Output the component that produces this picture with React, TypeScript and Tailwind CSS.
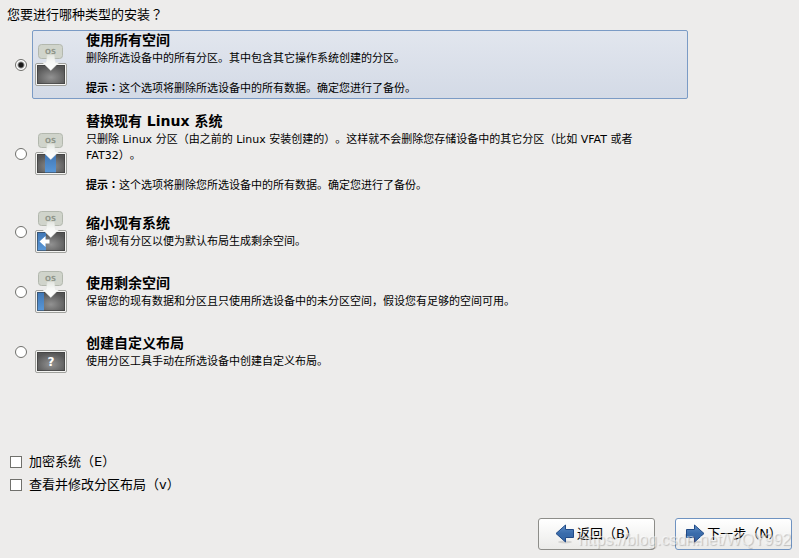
import { ReactNode, useId, useState } from 'react';

type InstallType = 'all' | 'replace' | 'shrink' | 'free' | 'custom';

type InstallOption = {
  value: InstallType;
  title: string;
  description: string;
  hint?: string;
};

const OPTIONS: InstallOption[] = [
  {
    value: 'all',
    title: '使用所有空间',
    description: '删除所选设备中的所有分区。其中包含其它操作系统创建的分区。',
    hint: '这个选项将删除所选设备中的所有数据。确定您进行了备份。'
  },
  {
    value: 'replace',
    title: '替换现有 Linux 系统',
    description:
      '只删除 Linux 分区（由之前的 Linux 安装创建的）。这样就不会删除您存储设备中的其它分区（比如 VFAT 或者 FAT32）。',
    hint: '这个选项将删除您所选设备中的所有数据。确定您进行了备份。'
  },
  {
    value: 'shrink',
    title: '缩小现有系统',
    description: '缩小现有分区以便为默认布局生成剩余空间。'
  },
  {
    value: 'free',
    title: '使用剩余空间',
    description: '保留您的现有数据和分区且只使用所选设备中的未分区空间，假设您有足够的空间可用。'
  },
  {
    value: 'custom',
    title: '创建自定义布局',
    description: '使用分区工具手动在所选设备中创建自定义布局。'
  }
];

function DiskIcon({ type }: { type: InstallType }) {
  const id = useId();

  return (
    <svg width="34" height="44" viewBox="0 0 34 44" className="shrink-0" aria-hidden="true">
      <defs>
        <radialGradient id={`${id}-disk`} cx="0.5" cy="0.65" r="0.6">
          <stop offset="0" stopColor="#929292" />
          <stop offset="1" stopColor="#565656" />
        </radialGradient>
        <linearGradient id={`${id}-part`} x1="0" y1="0" x2="0" y2="1">
          <stop offset="0" stopColor="#3f76b4" />
          <stop offset="1" stopColor="#5a98d8" />
        </linearGradient>
        <linearGradient id={`${id}-arrow`} x1="0" y1="0" x2="0" y2="1">
          <stop offset="0" stopColor="#e3e6e0" />
          <stop offset="0.4" stopColor="#f6f7f5" />
          <stop offset="1" stopColor="#ffffff" />
        </linearGradient>
      </defs>
      <rect x="1.5" y="20.5" width="31" height="22" rx="1.5" fill="#f4f4f2" stroke="#a0a19d" />
      <rect x="3" y="22" width="28" height="19" fill={`url(#${id}-disk)`} />
      {type === 'replace' && <rect x="11" y="22" width="11" height="19" fill={`url(#${id}-part)`} />}
      {type === 'shrink' && <rect x="3" y="22" width="9" height="19" fill={`url(#${id}-part)`} />}
      {type === 'free' && <rect x="3" y="22" width="7" height="19" fill={`url(#${id}-part)`} />}
      <rect x="3.5" y="22.5" width="27" height="18" fill="none" stroke="#333" strokeOpacity="0.5" />
      {type === 'custom' ? (
        <text x="17" y="36" textAnchor="middle" fontFamily="DejaVu Sans" fontSize="12" fontWeight="700" fill="#fff">
          ?
        </text>
      ) : (
        <>
          <rect x="4.5" y="1.5" width="24" height="14" rx="3" fill="#d0d4cb" stroke="#b3b8ae" />
          <text x="16.5" y="11" textAnchor="middle" fontFamily="DejaVu Sans" fontSize="7" fontWeight="700" fill="#8f958a">
            OS
          </text>
          <path d="M13.500 12h6.500l1.500 7.500h3.500l-8.200 8-8.300-8h3.500z" fill={`url(#${id}-arrow)`} stroke="#e4e6e2" strokeWidth="0.5" />
        </>
      )}
      {type === 'shrink' && <path d="M5.500 31.500l6-5.500v3.500h4v4h-4v3.500z" fill="#fff" />}
    </svg>
  );
}

function ArrowIcon({ direction }: { direction: 'left' | 'right' }) {
  const id = useId();

  return (
    <svg width="20" height="20" viewBox="0 0 20 20" className="shrink-0" aria-hidden="true">
      <defs>
        <linearGradient id={id} x1="0" y1="0" x2="0" y2="1">
          <stop offset="0" stopColor="#5c8cc6" />
          <stop offset="0.5" stopColor="#3a6cab" />
          <stop offset="1" stopColor="#3465a4" />
        </linearGradient>
      </defs>
      <ellipse cx="10" cy="18" rx="7" ry="1.5" fill="#000" opacity="0.12" />
      <path
        d={direction === 'left' ? 'M1 9.500L10.500 1v4.500h8v8h-8V18z' : 'M19 9.500L9.500 1v4.500h-8v8h8V18z'}
        fill={`url(#${id})`}
        stroke="#204a87"
        strokeLinejoin="round"
      />
    </svg>
  );
}

function OptionRow({ option, checked, onSelect }: { option: InstallOption; checked: boolean; onSelect: () => void }) {
  return (
    <label className="flex items-center gap-[5px]">
      <input
        type="radio"
        name="install-type"
        value={option.value}
        checked={checked}
        onChange={onSelect}
        className="size-3 shrink-0 appearance-none rounded-full border border-[#70706c] bg-white checked:bg-[radial-gradient(circle,#1a1a1a_2px,#fff_4px)]"
      />
      <span
        className={`flex w-full max-w-[656px] items-center gap-[18px] rounded-xs border p-px ${
          checked ? 'border-[#7b9bc5] bg-linear-to-b from-[#e2e6ee] to-[#d3dae6]' : 'border-transparent'
        }`}
      >
        <DiskIcon type={option.value} />
        <span className="flex flex-col gap-0.5 pr-10">
          <span className="text-sm leading-[17px] font-bold">{option.title}</span>
          <span className="text-[11px] leading-4">{option.description}</span>
          {option.hint && (
            <span className="mt-3 text-[11px] leading-4">
              <b className="font-['DejaVu_Sans','Noto_Sans_CJK_JP',sans-serif] leading-none">提示：</b>
              {option.hint}
            </span>
          )}
        </span>
      </span>
    </label>
  );
}

function CheckOption({ children }: { children: ReactNode }) {
  return (
    <label className="flex items-center gap-[7px] text-[13px] leading-[23px]">
      <input
        type="checkbox"
        className="size-3 shrink-0 appearance-none border border-[#70706c] bg-white checked:bg-[#4a6f9f]"
      />
      {children}
    </label>
  );
}

export default function App() {
  const [installType, setInstallType] = useState<InstallType>('all');

  return (
    <main className="relative flex min-h-screen flex-col bg-[#edeceb] px-[7px] pt-1.5 pb-2 font-['DejaVu_Sans','Noto_Sans_CJK_SC',sans-serif] text-black [text-spacing-trim:space-all]">
      <fieldset>
        <legend className="text-[13px] leading-[18px]">
          您要进行哪种类型的安装
          <span className="font-['DejaVu_Sans','Noto_Sans_CJK_JP',sans-serif] leading-none">？</span>
        </legend>
        <div className="flex flex-col gap-3 pt-1.5 pl-2">
          {OPTIONS.map((option) => (
            <OptionRow
              key={option.value}
              option={option}
              checked={installType === option.value}
              onSelect={() => setInstallType(option.value)}
            />
          ))}
        </div>
      </fieldset>

      <div className="mt-auto flex flex-col pt-6 pb-[22px] pl-[3px]">
        <CheckOption>加密系统（E）</CheckOption>
        <CheckOption>查看并修改分区布局（v）</CheckOption>
      </div>

      <div className="flex justify-end gap-5 text-[13px]">
        <button
          type="button"
          className="flex h-8 w-[117px] items-center justify-center gap-0.5 rounded-[3px] border border-[#8d8d89] bg-linear-to-b from-white to-[#ebebe9]"
        >
          <ArrowIcon direction="left" />
          返回（B）
        </button>
        <button
          type="button"
          className="flex h-8 w-[117px] items-center justify-center gap-0.5 rounded-[3px] border border-[#6f93c1] bg-linear-to-b from-white to-[#ebebe9]"
        >
          <ArrowIcon direction="right" />
          下一步（N）
        </button>
      </div>

      <span className="pointer-events-none absolute right-2 bottom-1.5 font-['Liberation_Sans',sans-serif] text-base text-white/50 [text-shadow:1px_1px_1px_#0003]">
        https://blog.csdn.net/WQY992
      </span>
    </main>
  );
}
